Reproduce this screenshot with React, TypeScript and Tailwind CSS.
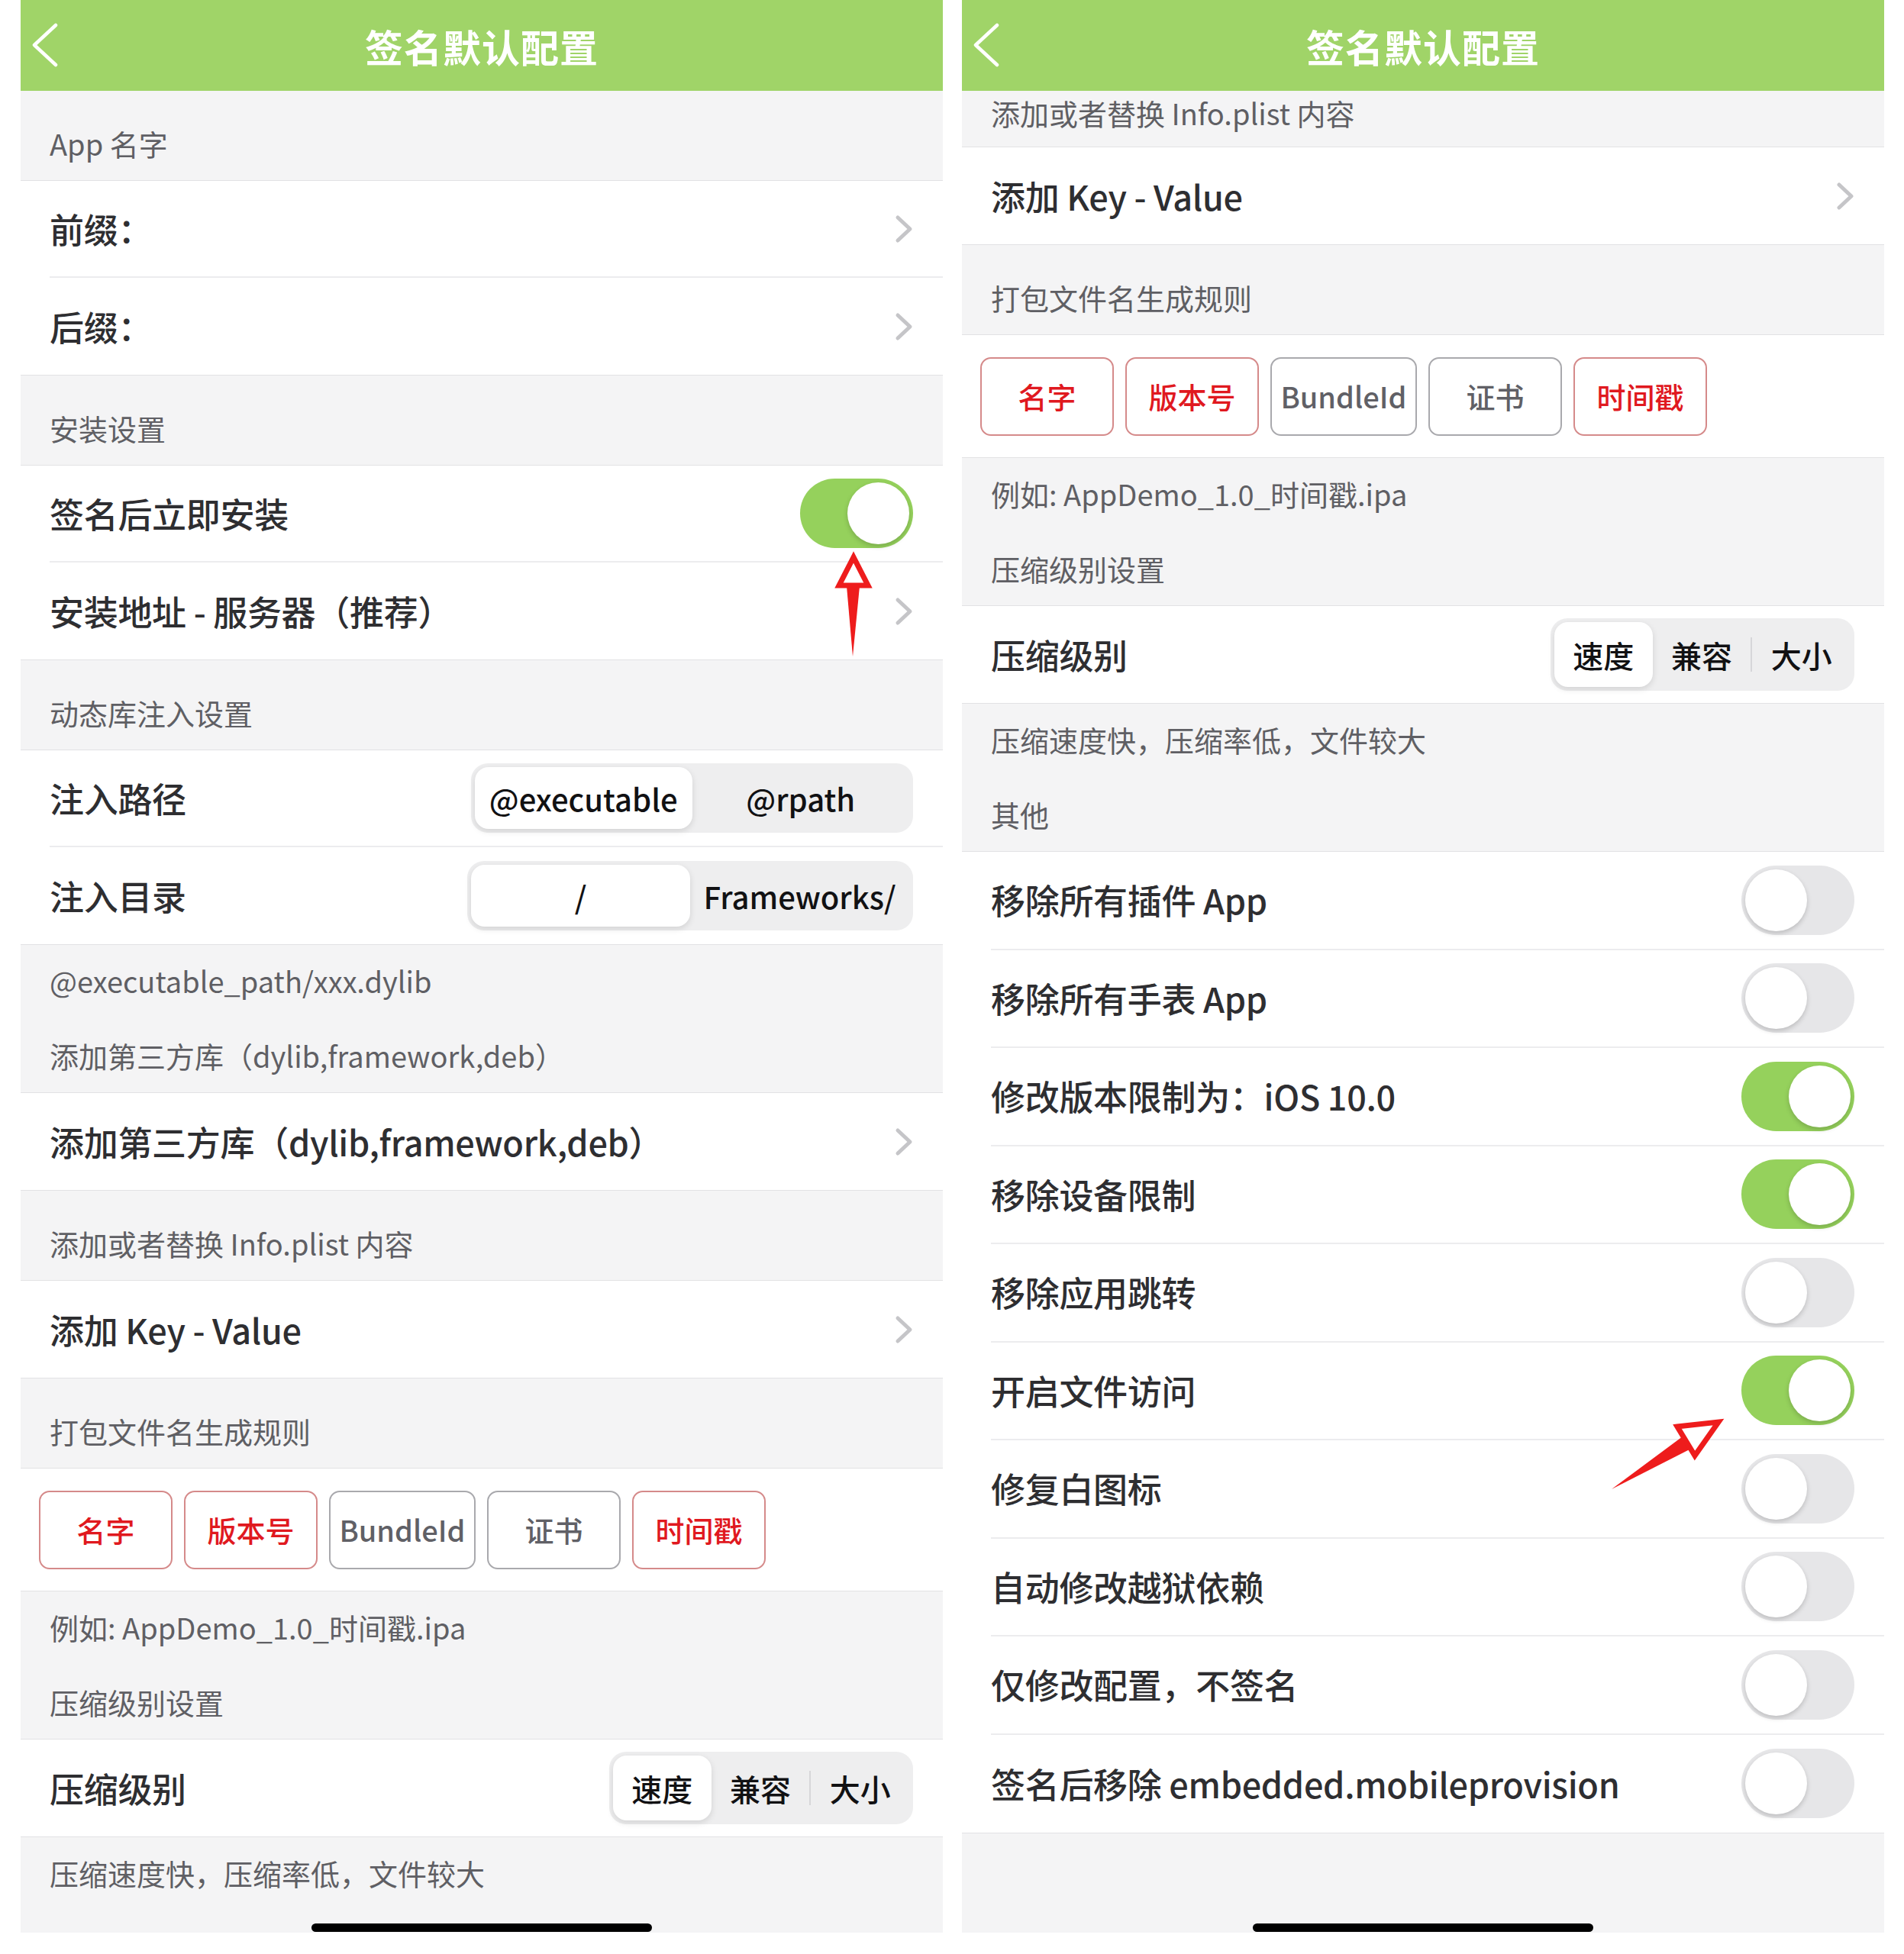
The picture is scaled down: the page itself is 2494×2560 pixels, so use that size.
import React from 'react';

const Chevron = () => (
  <svg width="24" height="38" viewBox="0 0 24 38" className="shrink-0">
    <polyline points="4,4 20,19 4,34" fill="none" stroke="#c5c5c8" strokeWidth="5" strokeLinecap="round" strokeLinejoin="round" />
  </svg>
);

const NavBar = () => (
  <div className="h-[119px] shrink-0 bg-[#a0d468] flex items-center relative">
    <svg width="40" height="58" viewBox="0 0 40 58" className="absolute left-[12px] top-[30px]">
      <polyline points="34,3 6,29 34,55" fill="none" stroke="#ffffff" strokeWidth="4.5" strokeLinecap="round" strokeLinejoin="round" />
    </svg>
    <div className="flex-1 text-center text-white font-bold text-[50px] leading-[60px] tracking-[1px]">签名默认配置</div>
  </div>
);

const SectionHeader = ({ text, afterFooter = false }: { text: string; afterFooter?: boolean }) => (
  <div className={`px-[38px] pb-[26px] text-[38px] leading-[44px] text-[#5f5f64] ${afterFooter ? 'pt-[54px]' : 'pt-[47px]'}`}>
    {text}
  </div>
);

const Footer = ({ text }: { text: string }) => (
  <div className="px-[38px] pt-[25px] text-[38px] leading-[44px] text-[#5f5f64]">{text}</div>
);

const Group = ({ children }: { children: React.ReactNode }) => (
  <div className="bg-white border-y border-[#e2e2e4]">{children}</div>
);

const Cell = ({ last = false, tall = false, title, children }: { last?: boolean; tall?: boolean; title: string; children?: React.ReactNode }) => (
  <div className={`pl-[38px] ${tall ? 'h-[128.5px]' : 'h-[127px]'}`}>
    <div className={`h-full flex items-center justify-between pr-[39px] ${last ? '' : 'border-b-2 border-[#ececee]'}`}>
      <span className="text-[45px] leading-[54px] font-medium text-[#2e2e31] whitespace-nowrap tracking-[-0.3px]">{title}</span>
      {children}
    </div>
  </div>
);

const Toggle = ({ on }: { on: boolean }) => (
  <div className={`w-[148px] h-[91px] rounded-full p-[5px] flex shrink-0 ${on ? 'bg-[#95d15c] justify-end' : 'bg-[#e6e6e8] justify-start'}`}>
    <div className="w-[81px] h-[81px] rounded-full bg-white shadow-[0_3px_6px_rgba(0,0,0,0.18)]" />
  </div>
);

const Segment = ({ items, width, height, divider = false }: { items: string[]; width: string; height: string; divider?: boolean }) => (
  <div className={`${width} ${height} bg-[#eeeeef] rounded-[22px] p-[5px] flex items-stretch shrink-0`}>
    {items.map((it, i) => (
      <React.Fragment key={it}>
        {divider && i === 2 && <div className="w-[2px] my-[20px] bg-[#d6d6d9]" />}
        <div
          className={`flex-1 flex items-center justify-center text-[40px] leading-[48px] font-medium text-[#111113] whitespace-nowrap ${
            i === 0 ? 'bg-white rounded-[18px] shadow-[0_3px_8px_rgba(0,0,0,0.12)]' : ''
          }`}
        >
          {it}
        </div>
      </React.Fragment>
    ))}
  </div>
);

const TagRow = () => {
  const tags = [
    { t: '名字', red: true, w: 'w-[175px]' },
    { t: '版本号', red: true, w: 'w-[175px]' },
    { t: 'BundleId', red: false, w: 'w-[192px]' },
    { t: '证书', red: false, w: 'w-[175px]' },
    { t: '时间戳', red: true, w: 'w-[175px]' },
  ];
  return (
    <div className="h-[160px] flex items-center gap-[15px] px-[24px]">
      {tags.map(tag => (
        <div
          key={tag.t}
          className={`${tag.w} h-[103px] rounded-[14px] border-2 flex items-center justify-center text-[38px] leading-[46px] font-medium ${
            tag.red ? 'border-[#d58a8a] text-[#e0191f]' : 'border-[#a9a9ad] text-[#606066]'
          }`}
        >
          {tag.t}
        </div>
      ))}
    </div>
  );
};

const HomeBar = () => (
  <div className="flex-1 flex flex-col justify-end items-center">
    <div className="w-[446px] h-[11px] rounded-full bg-black mb-[1px]" />
  </div>
);

const LeftPanel = () => (
  <div className="w-[1208px] h-[2532px] bg-[#f4f4f5] flex flex-col relative overflow-hidden">
    <NavBar />
    <SectionHeader text="App 名字" />
    <Group>
      <Cell title="前缀："><Chevron /></Cell>
      <Cell title="后缀：" last><Chevron /></Cell>
    </Group>
    <SectionHeader text="安装设置" />
    <Group>
      <Cell title="签名后立即安装"><Toggle on /></Cell>
      <Cell title="安装地址 - 服务器（推荐）" last><Chevron /></Cell>
    </Group>
    <SectionHeader text="动态库注入设置" />
    <Group>
      <Cell title="注入路径"><Segment items={['@executable', '@rpath']} width="w-[579px]" height="h-[91px]" /></Cell>
      <Cell title="注入目录" last><Segment items={['/', 'Frameworks/']} width="w-[584px]" height="h-[91px]" /></Cell>
    </Group>
    <Footer text="@executable_path/xxx.dylib" />
    <SectionHeader text="添加第三方库（dylib,framework,deb）" afterFooter />
    <Group>
      <Cell title="添加第三方库（dylib,framework,deb）" last><Chevron /></Cell>
    </Group>
    <SectionHeader text="添加或者替换 Info.plist 内容" />
    <Group>
      <Cell title="添加 Key - Value" last><Chevron /></Cell>
    </Group>
    <SectionHeader text="打包文件名生成规则" />
    <Group>
      <TagRow />
    </Group>
    <Footer text="例如: AppDemo_1.0_时间戳.ipa" />
    <SectionHeader text="压缩级别设置" afterFooter />
    <Group>
      <Cell title="压缩级别" last><Segment items={['速度', '兼容', '大小']} width="w-[398px]" height="h-[95px]" divider /></Cell>
    </Group>
    <Footer text="压缩速度快，压缩率低，文件较大" />
    <HomeBar />

    {/* red annotation arrow under the install toggle */}
    <svg className="absolute inset-0 pointer-events-none" width="1208" height="2532" viewBox="0 0 1208 2532">
      <polygon points="1082,768 1099,768 1090,860" fill="#ee1c1c" />
      <polygon points="1091,730 1072,767 1110,767" fill="#ffffff" stroke="#ee1c1c" strokeWidth="7" strokeLinejoin="miter" />
    </svg>
  </div>
);

const others: [string, boolean][] = [
  ['移除所有插件 App', false],
  ['移除所有手表 App', false],
  ['修改版本限制为：iOS 10.0', true],
  ['移除设备限制', true],
  ['移除应用跳转', false],
  ['开启文件访问', true],
  ['修复白图标', false],
  ['自动修改越狱依赖', false],
  ['仅修改配置，不签名', false],
  ['签名后移除 embedded.mobileprovision', false],
];

const RightPanel = () => (
  <div className="w-[1208px] h-[2532px] bg-[#f4f4f5] flex flex-col relative overflow-hidden">
    <NavBar />
    <div className="flex-1 min-h-0 flex flex-col">
      {/* list is scrolled: only the lower part of this section title shows under the nav bar */}
      <div className="h-[73px] px-[38px] pt-[7px] text-[38px] leading-[44px] text-[#5f5f64]">添加或者替换 Info.plist 内容</div>
      <Group>
        <Cell title="添加 Key - Value" last><Chevron /></Cell>
      </Group>
      <SectionHeader text="打包文件名生成规则" />
      <Group>
        <TagRow />
      </Group>
      <Footer text="例如: AppDemo_1.0_时间戳.ipa" />
      <SectionHeader text="压缩级别设置" afterFooter />
      <Group>
        <Cell title="压缩级别" last><Segment items={['速度', '兼容', '大小']} width="w-[398px]" height="h-[95px]" divider /></Cell>
      </Group>
      <Footer text="压缩速度快，压缩率低，文件较大" />
      <SectionHeader text="其他" afterFooter />
      <Group>
        {others.map(([t, on], i) => (
          <Cell key={t} title={t} tall last={i === others.length - 1}><Toggle on={on} /></Cell>
        ))}
      </Group>
      <HomeBar />
    </div>

    {/* red annotation arrow pointing at 开启文件访问 */}
    <svg className="absolute inset-0 pointer-events-none" width="1208" height="2532" viewBox="0 0 1208 2532">
      <polygon points="944,1882 955,1898 851,1951" fill="#ee1c1c" />
      <polygon points="937,1869 991,1863 960,1907" fill="#ffffff" stroke="#ee1c1c" strokeWidth="7" strokeLinejoin="miter" />
    </svg>
  </div>
);

export default function App() {
  return (
    <div className="w-[2494px] h-[2560px] bg-white flex gap-[25px] pl-[27px] font-['Noto_Sans_CJK_SC',sans-serif]">
      <LeftPanel />
      <RightPanel />
    </div>
  );
}
